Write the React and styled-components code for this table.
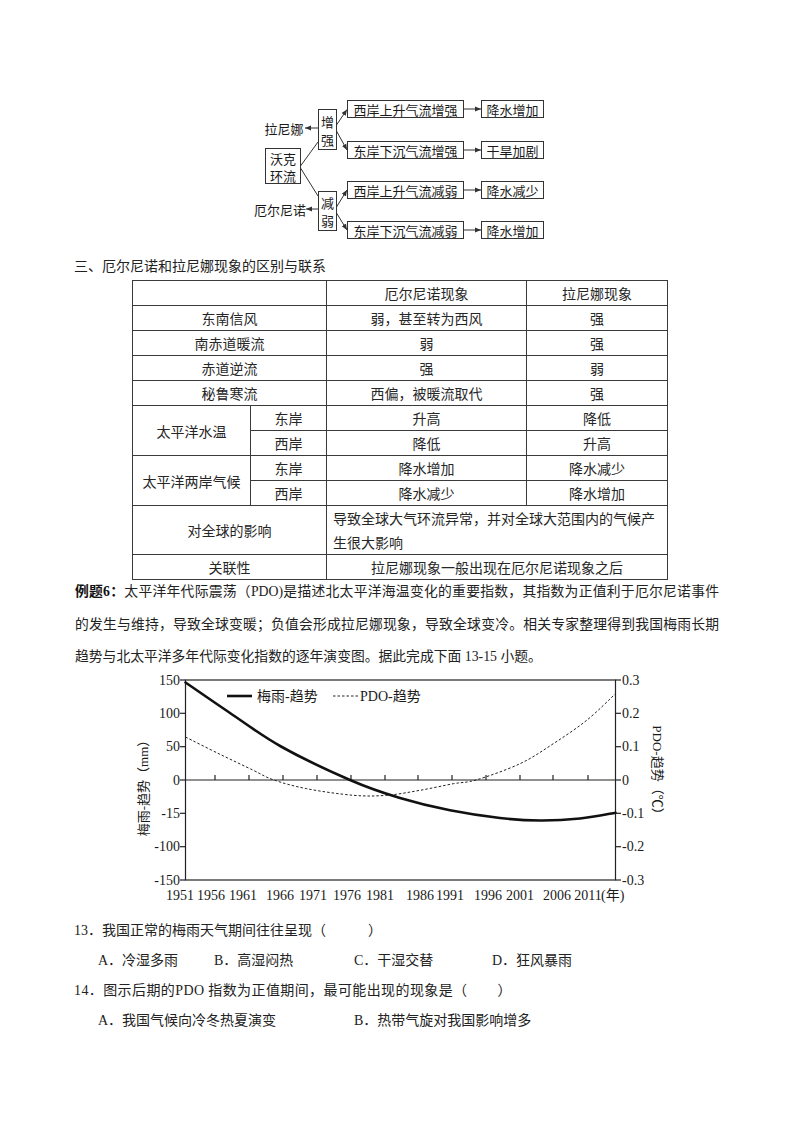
import React from "react";
import styled, { createGlobalStyle } from "styled-components";

const Global = createGlobalStyle`
  html, body { margin: 0; padding: 0; background: #fff; }
  body { font-family: "Liberation Serif", "Noto Sans CJK SC", serif; color: #1d1d1d; }
`;

const Page = styled.div`
  width: 800px;
  min-height: 1132px;
  padding-top: 92px;
  box-sizing: border-box;
  display: flex;
  flex-direction: column;
`;

const DiagramWrap = styled.div`
  padding-left: 240px;
  height: 152px;
  svg { display: block; }
`;

const Heading = styled.div`
  margin-top: 11px;
  padding-left: 74px;
  font-family: "Noto Sans CJK SC", sans-serif;
  font-size: 14px;
  line-height: 20px;
  color: #222;
`;

const Table = styled.table`
  margin: 5px 0 0 132px;
  width: 536px;
  border-collapse: collapse;
  table-layout: fixed;
  font-family: "Noto Sans CJK SC", sans-serif;
  font-size: 14px;
  color: #262626;
`;

const Td = styled.td`
  border: 1px solid #3a3a3a;
  height: ${(p) => (p.$tall ? 48 : 24)}px;
  padding: ${(p) => (p.$left ? "0 4px 0 6px" : "0")};
  text-align: ${(p) => (p.$left ? "left" : "center")};
  vertical-align: middle;
  line-height: 24px;
  box-sizing: border-box;
  white-space: ${(p) => (p.$left ? "normal" : "nowrap")};
`;

const Para = styled.div`
  padding-left: 75px;
  width: 644px;
  display: flex;
  flex-direction: column;
  gap: 8.5px;
  font-family: "Liberation Serif", "Noto Sans CJK SC", serif;
  font-size: 13.8px;
  line-height: 24px;
  color: #222;
`;

const ParaLine = styled.div`
  text-align: ${(p) => (p.$justify ? "justify" : "left")};
  text-align-last: ${(p) => (p.$justify ? "justify" : "left")};
  height: 24px;
`;

const Bold = styled.b`
  font-weight: 700;
  color: #111;
`;

const ChartWrap = styled.div`
  padding-left: 120px;
  height: 240px;
  svg { display: block; }
`;

const Questions = styled.div`
  margin-top: 7px;
  padding-left: 74px;
  display: flex;
  flex-direction: column;
  font-family: "Liberation Serif", "Noto Sans CJK SC", serif;
  font-size: 14px;
  line-height: 30px;
  color: #222;
`;

const QLine = styled.div`
  white-space: nowrap;
  letter-spacing: ${(p) => p.$spacing || 0}px;
`;

const Blank = styled.span`
  display: inline-block;
  width: ${(p) => p.$w}px;
`;

const Options = styled.div`
  padding-left: 24px;
  display: grid;
  grid-template-columns: ${(p) => p.$cols};
  white-space: nowrap;
`;

const Opt = styled.span``;

/* ---------- diagram ---------- */
const DText = ({ x, y, children, anchor = "middle" }) => (
  <text
    x={x}
    y={y}
    textAnchor={anchor}
    dominantBaseline="central"
    fontFamily="Noto Sans CJK SC, sans-serif"
    fontSize="13"
    fill="#1a1a1a"
  >
    {children}
  </text>
);

function Diagram() {
  const rows = [
    { y: 100, a: "西岸上升气流增强", b: "降水增加" },
    { y: 141, a: "东岸下沉气流增强", b: "干旱加剧" },
    { y: 181, a: "西岸上升气流减弱", b: "降水减少" },
    { y: 221, a: "东岸下沉气流减弱", b: "降水增加" },
  ];
  const s = { stroke: "#333", strokeWidth: 1, fill: "none" };
  return (
    <svg width="320" height="152" viewBox="240 92 320 152">
      <defs>
        <marker
          id="ah"
          markerUnits="userSpaceOnUse"
          markerWidth="7"
          markerHeight="6"
          refX="6"
          refY="3"
          orient="auto"
        >
          <path d="M0,0.5 L6,3 L0,5.5 z" fill="#333" />
        </marker>
      </defs>
      {/* left labels */}
      <DText x={284} y={128}>拉尼娜</DText>
      <DText x={280} y={209}>厄尔尼诺</DText>
      <line x1={318} y1={128} x2={305} y2={128} {...s} markerEnd="url(#ah)" />
      <line x1={318} y1={209} x2={306} y2={209} {...s} markerEnd="url(#ah)" />
      {/* walker box */}
      <rect x={265.5} y={148.5} width={35} height={35} fill="#fff" stroke="#333" />
      <DText x={283} y={158}>沃克</DText>
      <DText x={283} y={175}>环流</DText>
      <line x1={300.5} y1={166} x2={318} y2={142} {...s} />
      <line x1={300.5} y1={168} x2={318} y2={196} {...s} />
      {/* strengthen / weaken */}
      <rect x={318.5} y={109.5} width={18} height={40} fill="#fff" stroke="#333" />
      <DText x={327.5} y={121}>增</DText>
      <DText x={327.5} y={139}>强</DText>
      <rect x={318.5} y={191.5} width={18} height={39} fill="#fff" stroke="#333" />
      <DText x={327.5} y={202}>减</DText>
      <DText x={327.5} y={220}>弱</DText>
      <line x1={336.5} y1={125} x2={347} y2={109.5} {...s} markerEnd="url(#ah)" />
      <line x1={336.5} y1={131} x2={347} y2={150} {...s} markerEnd="url(#ah)" />
      <line x1={336.5} y1={207} x2={347} y2={190} {...s} markerEnd="url(#ah)" />
      <line x1={336.5} y1={213} x2={347} y2={230} {...s} markerEnd="url(#ah)" />
      {rows.map((r) => (
        <g key={r.y}>
          <rect x={347.5} y={r.y + 0.5} width={116} height={17} fill="#fff" stroke="#333" />
          <DText x={405.5} y={r.y + 9}>{r.a}</DText>
          <line x1={464} y1={r.y + 9} x2={481} y2={r.y + 9} {...s} markerEnd="url(#ah)" />
          <rect x={481.5} y={r.y + 0.5} width={62} height={17} fill="#fff" stroke="#333" />
          <DText x={512.5} y={r.y + 9}>{r.b}</DText>
        </g>
      ))}
    </svg>
  );
}

/* ---------- chart ---------- */
function smoothPath(pts) {
  let d = `M${pts[0][0]},${pts[0][1]}`;
  for (let i = 0; i < pts.length - 1; i++) {
    const p0 = pts[i - 1] || pts[i];
    const p1 = pts[i];
    const p2 = pts[i + 1];
    const p3 = pts[i + 2] || p2;
    const c1 = [p1[0] + (p2[0] - p0[0]) / 6, p1[1] + (p2[1] - p0[1]) / 6];
    const c2 = [p2[0] - (p3[0] - p1[0]) / 6, p2[1] - (p3[1] - p1[1]) / 6];
    d += ` C${c1[0].toFixed(1)},${c1[1].toFixed(1)} ${c2[0].toFixed(1)},${c2[1].toFixed(1)} ${p2[0]},${p2[1]}`;
  }
  return d;
}

const meiyu = [
  [185.5, 680.5],
  [230, 711],
  [281, 744.5],
  [350, 778],
  [400, 796],
  [450, 808.3],
  [500, 816],
  [540, 818.5],
  [580, 816.5],
  [615.5, 810.7],
];
const pdo = [
  [185.5, 735],
  [220, 752.3],
  [253.3, 768.3],
  [273.3, 777.8],
  [306.7, 786.7],
  [353.3, 793.3],
  [386.7, 793.3],
  [420, 788.3],
  [453.3, 781.7],
  [476.7, 777.8],
  [520, 761.7],
  [553.3, 741.7],
  [586.7, 718.3],
  [615.5, 691.7],
];

const leftLabels = [
  ["150", 678],
  ["100", 711.3],
  ["50", 744.7],
  ["0", 778],
  ["-15", 811.3],
  ["-100", 844.7],
  ["-150", 878],
];
const rightLabels = [
  ["0.3", 678],
  ["0.2", 711.3],
  ["0.1", 744.7],
  ["0", 778],
  ["-0.1", 811.3],
  ["-0.2", 844.7],
  ["-0.3", 878],
];
const years = [
  ["1951", 180],
  ["1956", 211],
  ["1961", 243],
  ["1966", 280],
  ["1971", 313],
  ["1976", 347],
  ["1981", 380],
  ["1986", 420],
  ["1991", 450],
  ["1996", 488],
  ["2001", 520],
  ["2006", 557],
  ["2011", 588],
];
const ticks = [215, 249, 283, 317, 351, 385, 418, 452, 486, 520, 553, 588];

function Chart() {
  const font = "Liberation Serif, Noto Sans CJK SC, serif";
  const ax = { stroke: "#222", strokeWidth: 1.2, fill: "none" };
  return (
    <svg width="580" height="240" viewBox="120 667 580 240">
      <rect x={185.5} y={678} width={430} height={200} {...ax} />
      <line x1={185.5} y1={778} x2={615.5} y2={778} {...ax} />
      {ticks.map((t) => (
        <line key={t} x1={t} y1={778} x2={t} y2={773} {...ax} />
      ))}
      {leftLabels.map(([l, y]) => (
        <g key={"l" + l}>
          <line x1={185.5} y1={y} x2={180} y2={y} {...ax} />
          <text x={180} y={y} textAnchor="end" dominantBaseline="central" fontFamily={font} fontSize="14" fill="#1a1a1a">
            {l}
          </text>
        </g>
      ))}
      {rightLabels.map(([l, y]) => (
        <g key={"r" + l}>
          <line x1={615.5} y1={y} x2={621} y2={y} {...ax} />
          <text x={622} y={y} textAnchor="start" dominantBaseline="central" fontFamily={font} fontSize="14" fill="#1a1a1a">
            {l}
          </text>
        </g>
      ))}
      {years.map(([l, x]) => (
        <text key={l} x={x} y={893} textAnchor="middle" dominantBaseline="central" fontFamily={font} fontSize="14" fill="#1a1a1a">
          {l}
        </text>
      ))}
      <text x={601} y={893} dominantBaseline="central" fontFamily={font} fontSize="14" fill="#1a1a1a">
        (年)
      </text>
      <text
        transform="translate(143 783) rotate(-90)"
        textAnchor="middle"
        dominantBaseline="central"
        fontFamily={font}
        fontSize="13"
        fill="#1a1a1a"
      >
        梅雨-趋势（mm）
      </text>
      <text
        transform="translate(657 771) rotate(90)"
        textAnchor="middle"
        dominantBaseline="central"
        fontFamily={font}
        fontSize="13"
        fill="#1a1a1a"
      >
        PDO-趋势（℃）
      </text>
      {/* legend */}
      <line x1={227} y1={694} x2={252} y2={694} stroke="#111" strokeWidth={2.6} />
      <text x={257} y={694} dominantBaseline="central" fontFamily={font} fontSize="14" fill="#1a1a1a">
        梅雨-趋势
      </text>
      <line x1={333} y1={694} x2={358} y2={694} stroke="#222" strokeWidth={1} strokeDasharray="2.5 2" />
      <text x={360} y={694} dominantBaseline="central" fontFamily={font} fontSize="14" fill="#1a1a1a">
        PDO-趋势
      </text>
      {/* curves */}
      <path d={smoothPath(pdo)} fill="none" stroke="#222" strokeWidth={1} strokeDasharray="2.5 2" />
      <path d={smoothPath(meiyu)} fill="none" stroke="#111" strokeWidth={2.6} strokeLinecap="round" />
    </svg>
  );
}

export default function App() {
  return (
    <>
      <Global />
      <Page>
        <DiagramWrap>
          <Diagram />
        </DiagramWrap>
        <Heading>三、厄尔尼诺和拉尼娜现象的区别与联系</Heading>
        <Table>
          <colgroup>
            <col style={{ width: 118 }} />
            <col style={{ width: 76 }} />
            <col style={{ width: 200 }} />
            <col style={{ width: 141 }} />
          </colgroup>
          <tbody>
            <tr>
              <Td colSpan={2}></Td>
              <Td>厄尔尼诺现象</Td>
              <Td>拉尼娜现象</Td>
            </tr>
            <tr>
              <Td colSpan={2}>东南信风</Td>
              <Td>弱，甚至转为西风</Td>
              <Td>强</Td>
            </tr>
            <tr>
              <Td colSpan={2}>南赤道暖流</Td>
              <Td>弱</Td>
              <Td>强</Td>
            </tr>
            <tr>
              <Td colSpan={2}>赤道逆流</Td>
              <Td>强</Td>
              <Td>弱</Td>
            </tr>
            <tr>
              <Td colSpan={2}>秘鲁寒流</Td>
              <Td>西偏，被暖流取代</Td>
              <Td>强</Td>
            </tr>
            <tr>
              <Td rowSpan={2}>太平洋水温</Td>
              <Td>东岸</Td>
              <Td>升高</Td>
              <Td>降低</Td>
            </tr>
            <tr>
              <Td>西岸</Td>
              <Td>降低</Td>
              <Td>升高</Td>
            </tr>
            <tr>
              <Td rowSpan={2}>太平洋两岸气候</Td>
              <Td>东岸</Td>
              <Td>降水增加</Td>
              <Td>降水减少</Td>
            </tr>
            <tr>
              <Td>西岸</Td>
              <Td>降水减少</Td>
              <Td>降水增加</Td>
            </tr>
            <tr>
              <Td colSpan={2} $tall>
                对全球的影响
              </Td>
              <Td colSpan={2} $tall $left>
                导致全球大气环流异常，并对全球大范围内的气候产生很大影响
              </Td>
            </tr>
            <tr>
              <Td colSpan={2}>关联性</Td>
              <Td colSpan={2}>拉尼娜现象一般出现在厄尔尼诺现象之后</Td>
            </tr>
          </tbody>
        </Table>
        <Para>
          <ParaLine $justify>
            <Bold>例题6：</Bold>太平洋年代际震荡（PDO)是描述北太平洋海温变化的重要指数，其指数为正值利于厄尔尼诺事件
          </ParaLine>
          <ParaLine $justify>
            的发生与维持，导致全球变暖；负值会形成拉尼娜现象，导致全球变冷。相关专家整理得到我国梅雨长期
          </ParaLine>
          <ParaLine>趋势与北太平洋多年代际变化指数的逐年演变图。据此完成下面 13-15 小题。</ParaLine>
        </Para>
        <ChartWrap>
          <Chart />
        </ChartWrap>
        <Questions>
          <QLine>
            13．我国正常的梅雨天气期间往往呈现（<Blank $w={42} />）
          </QLine>
          <Options $cols="116px 140px 138px auto">
            <Opt>A．冷湿多雨</Opt>
            <Opt>B．高湿闷热</Opt>
            <Opt>C．干湿交替</Opt>
            <Opt>D．狂风暴雨</Opt>
          </Options>
          <QLine $spacing={0.4}>
            14．图示后期的PDO 指数为正值期间，最可能出现的现象是（<Blank $w={30} />）
          </QLine>
          <Options $cols="256px auto">
            <Opt>A．我国气候向冷冬热夏演变</Opt>
            <Opt>B．热带气旋对我国影响增多</Opt>
          </Options>
        </Questions>
      </Page>
    </>
  );
}
